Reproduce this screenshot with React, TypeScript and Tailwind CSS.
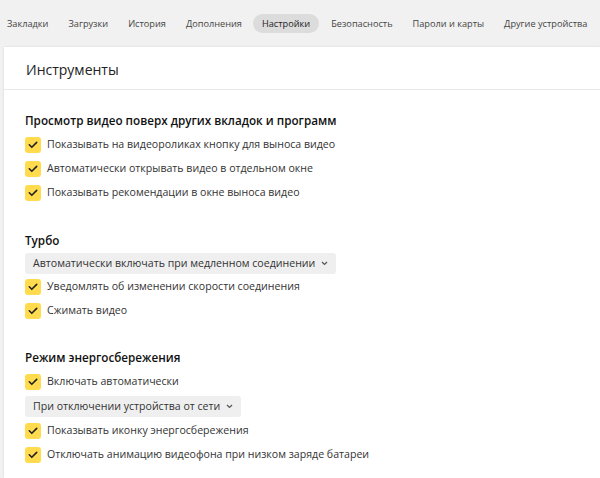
import React from "react";

const tabs = ["Закладки", "Загрузки", "История", "Дополнения", "Настройки", "Безопасность", "Пароли и карты", "Другие устройства"];

function Check() {
  return (
    <span className="flex h-[16px] w-[16px] shrink-0 items-center justify-center rounded-[3px] bg-[#ffdb4d]">
      <svg width="10" height="8" viewBox="0 0 10 8" fill="none">
        <path d="M1.3 3.8 L3.8 6.3 L8.7 1.4" stroke="#222" strokeWidth="1.6" strokeLinecap="round" strokeLinejoin="round" />
      </svg>
    </span>
  );
}

function Row({ text }: { text: string }) {
  return (
    <div className="flex h-[24px] items-center gap-[6px]">
      <Check />
      <span>{text}</span>
    </div>
  );
}

function Select({ text, loose }: { text: string; loose?: boolean }) {
  return (
    <div
      className={
        (loose ? "mt-[2px] mb-[2px] " : "mt-[1px] mb-[1px] ") +
        "flex h-[21px] w-fit items-center gap-[6px] rounded-[3px] bg-[#efefef] px-[8px]"
      }
    >
      <span>{text}</span>
      <svg width="7" height="5" viewBox="0 0 7 5" fill="none">
        <path d="M1 1 L3.5 3.5 L6 1" stroke="#555" strokeWidth="1.2" />
      </svg>
    </div>
  );
}

function Heading({ text }: { text: string }) {
  return (
    <div className="mb-[4px] flex h-[16px] items-center text-[11.7px] font-semibold text-[#111]">{text}</div>
  );
}

export default function App() {
  return (
    <div
      className="h-[478px] w-[600px] overflow-hidden bg-[#f1f1f1] text-[10.6px] text-[#333]"
      style={{ fontFamily: '"Open Sans", "Noto Sans", sans-serif' }}
    >
      <div className="flex h-[47px] items-center whitespace-nowrap pl-[7px] text-[9.2px] text-[#444]">
        {tabs.map((t) => (
          <div
            key={t}
            className={
              t === "Настройки"
                ? "mr-[12px] ml-[-9px] rounded-full bg-[#dcdcdc] px-[9px] py-[3px] text-[#222]"
                : "mr-[20px] py-[3px]"
            }
          >
            {t}
          </div>
        ))}
      </div>
      <div className="ml-[4px] h-[431px] bg-white shadow-[0_0_2px_rgba(0,0,0,0.12)]">
        <div className="flex h-[43px] items-center border-b border-[#e8e8e8] pl-[22px] pt-[2px] text-[14px] text-[#222]">
          Инструменты
        </div>
        <div className="pl-[21px] pt-[23px]">
          <Heading text="Просмотр видео поверх других вкладок и программ" />
          <Row text="Показывать на видеороликах кнопку для выноса видео" />
          <Row text="Автоматически открывать видео в отдельном окне" />
          <Row text="Показывать рекомендации в окне выноса видео" />
          <div className="h-[28px]" />
          <Heading text="Турбо" />
          <Select text="Автоматически включать при медленном соединении" />
          <Row text="Уведомлять об изменении скорости соединения" />
          <Row text="Сжимать видео" />
          <div className="h-[27px]" />
          <Heading text="Режим энергосбережения" />
          <Row text="Включать автоматически" />
          <Select loose text="При отключении устройства от сети" />
          <Row text="Показывать иконку энергосбережения" />
          <Row text="Отключать анимацию видеофона при низком заряде батареи" />
        </div>
      </div>
    </div>
  );
}
